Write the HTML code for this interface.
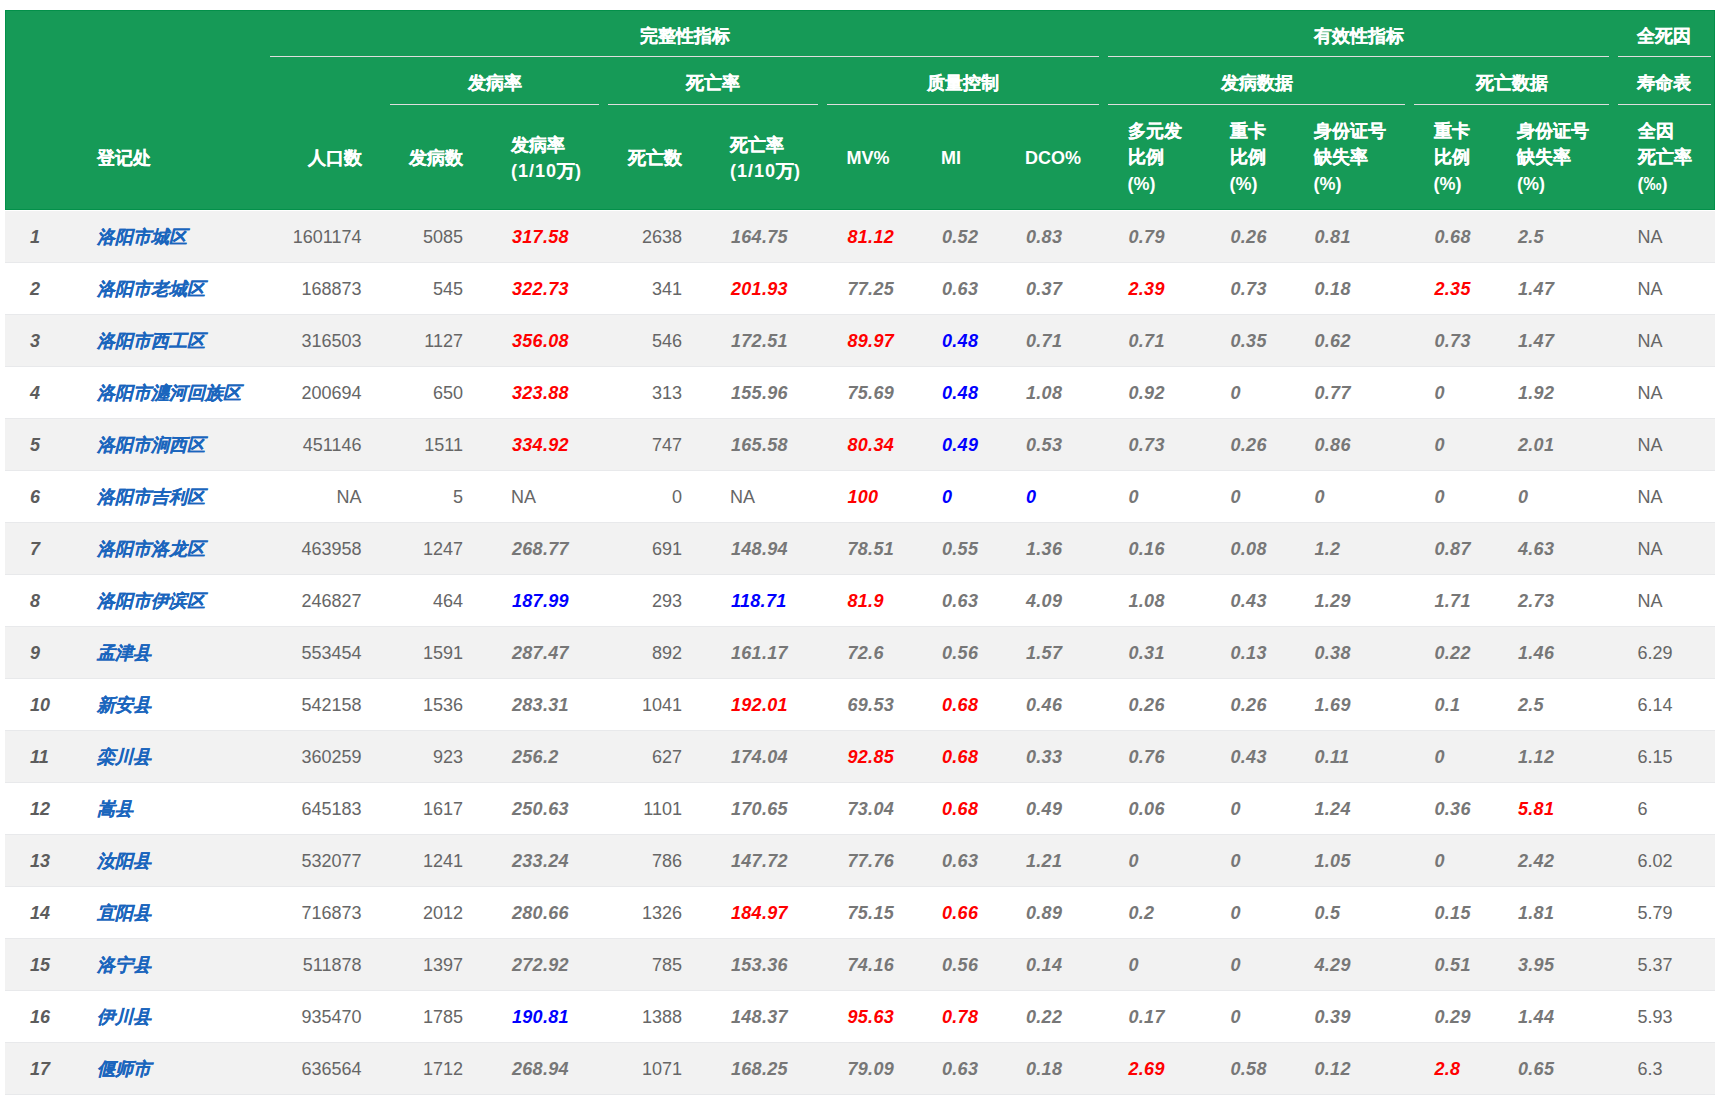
<!DOCTYPE html><html><head><meta charset="utf-8"><style>
*{margin:0;padding:0;box-sizing:border-box}
html,body{width:1721px;height:1106px;background:#fff;overflow:hidden}
body{font-family:"Liberation Sans",sans-serif;font-size:18px;position:relative}
#hd{position:absolute;left:5px;top:10px;width:1710px;height:200px;background:#169a57;border:1px solid #03904a}
.h{position:absolute;color:#fff;font-weight:bold;font-size:18px;white-space:nowrap;line-height:26px}
.ln{position:absolute;height:1px;background:#dedede}
#tb{position:absolute;left:5px;top:211px;border-collapse:separate;border-spacing:0;table-layout:fixed;width:1710px}
#tb td{height:52px;padding:2px 24px 0;border-bottom:1px solid #e8e9eb;white-space:nowrap;color:#666;font-size:18px;vertical-align:middle}
#tb tr:nth-child(odd) td{background:#f2f2f2}
#tb td.i{font-style:italic;font-weight:bold;color:#777}
#tb td.n0{font-style:italic;font-weight:bold;color:#5c5c5c}
#tb td.lk{font-style:italic;font-weight:bold;color:#1a65bd}
#tb td.rt{text-align:right}
.h .c{-webkit-text-stroke:0.2px #fff}
#tb td.lk .c{-webkit-text-stroke:0.1px #1a65bd;position:relative;top:-1px}
#tb td.i{letter-spacing:0.3px;padding-left:25px}
#tb td.n0{padding-left:25px}
.ls{letter-spacing:1px}
.dn{position:relative;top:1px}
#tb td.r{color:#f00}
#tb td.b{color:#00f}
</style></head><body>
<div id="hd"></div>
<div class="h" style="left:265.5px;top:23px;width:838.0px;text-align:center;"><span class="c">完整性指标</span></div>
<div class="h" style="left:1103.5px;top:23px;width:510.0px;text-align:center;"><span class="c">有效性指标</span></div>
<div class="h" style="left:1613.5px;top:23px;width:101.5px;text-align:center;"><span class="c">全死因</span></div>
<div class="h" style="left:385.5px;top:70px;width:218.0px;text-align:center;"><span class="c">发病率</span></div>
<div class="h" style="left:603.5px;top:70px;width:219.0px;text-align:center;"><span class="c">死亡率</span></div>
<div class="h" style="left:822.5px;top:70px;width:281.0px;text-align:center;"><span class="c">质量控制</span></div>
<div class="h" style="left:1103.5px;top:70px;width:306.0px;text-align:center;"><span class="c">发病数据</span></div>
<div class="h" style="left:1409.5px;top:70px;width:204.0px;text-align:center;"><span class="c">死亡数据</span></div>
<div class="h" style="left:1613.5px;top:70px;width:101.5px;text-align:center;"><span class="c">寿命表</span></div>
<div class="h" style="left:97px;top:145px;"><span class="c">登记处</span></div>
<div class="h" style="left:265.5px;top:145px;width:96.0px;text-align:right;"><span class="c">人口数</span></div>
<div class="h" style="left:385.5px;top:145px;width:77.5px;text-align:right;"><span class="c">发病数</span></div>
<div class="h" style="left:511px;top:132px;"><span class="c">发病率</span><br><span class="ls">(1/10</span><span class="c">万</span>)</div>
<div class="h" style="left:603.5px;top:145px;width:78.5px;text-align:right;"><span class="c">死亡数</span></div>
<div class="h" style="left:730px;top:132px;"><span class="c">死亡率</span><br><span class="ls">(1/10</span><span class="c">万</span>)</div>
<div class="h" style="left:846.5px;top:145px;">MV%</div>
<div class="h" style="left:941px;top:145px;">MI</div>
<div class="h" style="left:1025px;top:145px;">DCO%</div>
<div class="h" style="left:1127.5px;top:118px;"><span class="c">多元发</span><br><span class="c">比例</span><br><span class="dn">(%)</span></div>
<div class="h" style="left:1229.5px;top:118px;"><span class="c">重卡</span><br><span class="c">比例</span><br><span class="dn">(%)</span></div>
<div class="h" style="left:1313.5px;top:118px;"><span class="c">身份证号</span><br><span class="c">缺失率</span><br><span class="dn">(%)</span></div>
<div class="h" style="left:1433.5px;top:118px;"><span class="c">重卡</span><br><span class="c">比例</span><br><span class="dn">(%)</span></div>
<div class="h" style="left:1517px;top:118px;"><span class="c">身份证号</span><br><span class="c">缺失率</span><br><span class="dn">(%)</span></div>
<div class="h" style="left:1637.5px;top:118px;"><span class="c">全因</span><br><span class="c">死亡率</span><br><span class="dn">(‰)</span></div>
<div class="ln" style="left:270px;top:56px;width:829px"></div>
<div class="ln" style="left:1108px;top:56px;width:501px"></div>
<div class="ln" style="left:1618px;top:56px;width:93px"></div>
<div class="ln" style="left:390px;top:104px;width:209px"></div>
<div class="ln" style="left:608px;top:104px;width:210px"></div>
<div class="ln" style="left:827px;top:104px;width:272px"></div>
<div class="ln" style="left:1108px;top:104px;width:297px"></div>
<div class="ln" style="left:1414px;top:104px;width:195px"></div>
<div class="ln" style="left:1618px;top:104px;width:93px"></div>
<table id="tb"><colgroup><col style="width:68px"><col style="width:192.5px"><col style="width:120.0px"><col style="width:101.5px"><col style="width:116.5px"><col style="width:102.5px"><col style="width:116.5px"><col style="width:94.5px"><col style="width:84px"><col style="width:102.5px"><col style="width:102.0px"><col style="width:84.0px"><col style="width:120.0px"><col style="width:83.5px"><col style="width:120.5px"><col style="width:101.5px"></colgroup>
<tr>
<td class="n0">1</td>
<td class="lk"><span class="c">洛阳市城区</span></td>
<td class="rt">1601174</td>
<td class="rt">5085</td>
<td class="i r">317.58</td>
<td class="rt">2638</td>
<td class="i">164.75</td>
<td class="i r">81.12</td>
<td class="i">0.52</td>
<td class="i">0.83</td>
<td class="i">0.79</td>
<td class="i">0.26</td>
<td class="i">0.81</td>
<td class="i">0.68</td>
<td class="i">2.5</td>
<td>NA</td>
</tr>
<tr>
<td class="n0">2</td>
<td class="lk"><span class="c">洛阳市老城区</span></td>
<td class="rt">168873</td>
<td class="rt">545</td>
<td class="i r">322.73</td>
<td class="rt">341</td>
<td class="i r">201.93</td>
<td class="i">77.25</td>
<td class="i">0.63</td>
<td class="i">0.37</td>
<td class="i r">2.39</td>
<td class="i">0.73</td>
<td class="i">0.18</td>
<td class="i r">2.35</td>
<td class="i">1.47</td>
<td>NA</td>
</tr>
<tr>
<td class="n0">3</td>
<td class="lk"><span class="c">洛阳市西工区</span></td>
<td class="rt">316503</td>
<td class="rt">1127</td>
<td class="i r">356.08</td>
<td class="rt">546</td>
<td class="i">172.51</td>
<td class="i r">89.97</td>
<td class="i b">0.48</td>
<td class="i">0.71</td>
<td class="i">0.71</td>
<td class="i">0.35</td>
<td class="i">0.62</td>
<td class="i">0.73</td>
<td class="i">1.47</td>
<td>NA</td>
</tr>
<tr>
<td class="n0">4</td>
<td class="lk"><span class="c">洛阳市瀍河回族区</span></td>
<td class="rt">200694</td>
<td class="rt">650</td>
<td class="i r">323.88</td>
<td class="rt">313</td>
<td class="i">155.96</td>
<td class="i">75.69</td>
<td class="i b">0.48</td>
<td class="i">1.08</td>
<td class="i">0.92</td>
<td class="i">0</td>
<td class="i">0.77</td>
<td class="i">0</td>
<td class="i">1.92</td>
<td>NA</td>
</tr>
<tr>
<td class="n0">5</td>
<td class="lk"><span class="c">洛阳市涧西区</span></td>
<td class="rt">451146</td>
<td class="rt">1511</td>
<td class="i r">334.92</td>
<td class="rt">747</td>
<td class="i">165.58</td>
<td class="i r">80.34</td>
<td class="i b">0.49</td>
<td class="i">0.53</td>
<td class="i">0.73</td>
<td class="i">0.26</td>
<td class="i">0.86</td>
<td class="i">0</td>
<td class="i">2.01</td>
<td>NA</td>
</tr>
<tr>
<td class="n0">6</td>
<td class="lk"><span class="c">洛阳市吉利区</span></td>
<td class="rt">NA</td>
<td class="rt">5</td>
<td>NA</td>
<td class="rt">0</td>
<td>NA</td>
<td class="i r">100</td>
<td class="i b">0</td>
<td class="i b">0</td>
<td class="i">0</td>
<td class="i">0</td>
<td class="i">0</td>
<td class="i">0</td>
<td class="i">0</td>
<td>NA</td>
</tr>
<tr>
<td class="n0">7</td>
<td class="lk"><span class="c">洛阳市洛龙区</span></td>
<td class="rt">463958</td>
<td class="rt">1247</td>
<td class="i">268.77</td>
<td class="rt">691</td>
<td class="i">148.94</td>
<td class="i">78.51</td>
<td class="i">0.55</td>
<td class="i">1.36</td>
<td class="i">0.16</td>
<td class="i">0.08</td>
<td class="i">1.2</td>
<td class="i">0.87</td>
<td class="i">4.63</td>
<td>NA</td>
</tr>
<tr>
<td class="n0">8</td>
<td class="lk"><span class="c">洛阳市伊滨区</span></td>
<td class="rt">246827</td>
<td class="rt">464</td>
<td class="i b">187.99</td>
<td class="rt">293</td>
<td class="i b">118.71</td>
<td class="i r">81.9</td>
<td class="i">0.63</td>
<td class="i">4.09</td>
<td class="i">1.08</td>
<td class="i">0.43</td>
<td class="i">1.29</td>
<td class="i">1.71</td>
<td class="i">2.73</td>
<td>NA</td>
</tr>
<tr>
<td class="n0">9</td>
<td class="lk"><span class="c">孟津县</span></td>
<td class="rt">553454</td>
<td class="rt">1591</td>
<td class="i">287.47</td>
<td class="rt">892</td>
<td class="i">161.17</td>
<td class="i">72.6</td>
<td class="i">0.56</td>
<td class="i">1.57</td>
<td class="i">0.31</td>
<td class="i">0.13</td>
<td class="i">0.38</td>
<td class="i">0.22</td>
<td class="i">1.46</td>
<td>6.29</td>
</tr>
<tr>
<td class="n0">10</td>
<td class="lk"><span class="c">新安县</span></td>
<td class="rt">542158</td>
<td class="rt">1536</td>
<td class="i">283.31</td>
<td class="rt">1041</td>
<td class="i r">192.01</td>
<td class="i">69.53</td>
<td class="i r">0.68</td>
<td class="i">0.46</td>
<td class="i">0.26</td>
<td class="i">0.26</td>
<td class="i">1.69</td>
<td class="i">0.1</td>
<td class="i">2.5</td>
<td>6.14</td>
</tr>
<tr>
<td class="n0">11</td>
<td class="lk"><span class="c">栾川县</span></td>
<td class="rt">360259</td>
<td class="rt">923</td>
<td class="i">256.2</td>
<td class="rt">627</td>
<td class="i">174.04</td>
<td class="i r">92.85</td>
<td class="i r">0.68</td>
<td class="i">0.33</td>
<td class="i">0.76</td>
<td class="i">0.43</td>
<td class="i">0.11</td>
<td class="i">0</td>
<td class="i">1.12</td>
<td>6.15</td>
</tr>
<tr>
<td class="n0">12</td>
<td class="lk"><span class="c">嵩县</span></td>
<td class="rt">645183</td>
<td class="rt">1617</td>
<td class="i">250.63</td>
<td class="rt">1101</td>
<td class="i">170.65</td>
<td class="i">73.04</td>
<td class="i r">0.68</td>
<td class="i">0.49</td>
<td class="i">0.06</td>
<td class="i">0</td>
<td class="i">1.24</td>
<td class="i">0.36</td>
<td class="i r">5.81</td>
<td>6</td>
</tr>
<tr>
<td class="n0">13</td>
<td class="lk"><span class="c">汝阳县</span></td>
<td class="rt">532077</td>
<td class="rt">1241</td>
<td class="i">233.24</td>
<td class="rt">786</td>
<td class="i">147.72</td>
<td class="i">77.76</td>
<td class="i">0.63</td>
<td class="i">1.21</td>
<td class="i">0</td>
<td class="i">0</td>
<td class="i">1.05</td>
<td class="i">0</td>
<td class="i">2.42</td>
<td>6.02</td>
</tr>
<tr>
<td class="n0">14</td>
<td class="lk"><span class="c">宜阳县</span></td>
<td class="rt">716873</td>
<td class="rt">2012</td>
<td class="i">280.66</td>
<td class="rt">1326</td>
<td class="i r">184.97</td>
<td class="i">75.15</td>
<td class="i r">0.66</td>
<td class="i">0.89</td>
<td class="i">0.2</td>
<td class="i">0</td>
<td class="i">0.5</td>
<td class="i">0.15</td>
<td class="i">1.81</td>
<td>5.79</td>
</tr>
<tr>
<td class="n0">15</td>
<td class="lk"><span class="c">洛宁县</span></td>
<td class="rt">511878</td>
<td class="rt">1397</td>
<td class="i">272.92</td>
<td class="rt">785</td>
<td class="i">153.36</td>
<td class="i">74.16</td>
<td class="i">0.56</td>
<td class="i">0.14</td>
<td class="i">0</td>
<td class="i">0</td>
<td class="i">4.29</td>
<td class="i">0.51</td>
<td class="i">3.95</td>
<td>5.37</td>
</tr>
<tr>
<td class="n0">16</td>
<td class="lk"><span class="c">伊川县</span></td>
<td class="rt">935470</td>
<td class="rt">1785</td>
<td class="i b">190.81</td>
<td class="rt">1388</td>
<td class="i">148.37</td>
<td class="i r">95.63</td>
<td class="i r">0.78</td>
<td class="i">0.22</td>
<td class="i">0.17</td>
<td class="i">0</td>
<td class="i">0.39</td>
<td class="i">0.29</td>
<td class="i">1.44</td>
<td>5.93</td>
</tr>
<tr>
<td class="n0">17</td>
<td class="lk"><span class="c">偃师市</span></td>
<td class="rt">636564</td>
<td class="rt">1712</td>
<td class="i">268.94</td>
<td class="rt">1071</td>
<td class="i">168.25</td>
<td class="i">79.09</td>
<td class="i">0.63</td>
<td class="i">0.18</td>
<td class="i r">2.69</td>
<td class="i">0.58</td>
<td class="i">0.12</td>
<td class="i r">2.8</td>
<td class="i">0.65</td>
<td>6.3</td>
</tr>
</table></body></html>
